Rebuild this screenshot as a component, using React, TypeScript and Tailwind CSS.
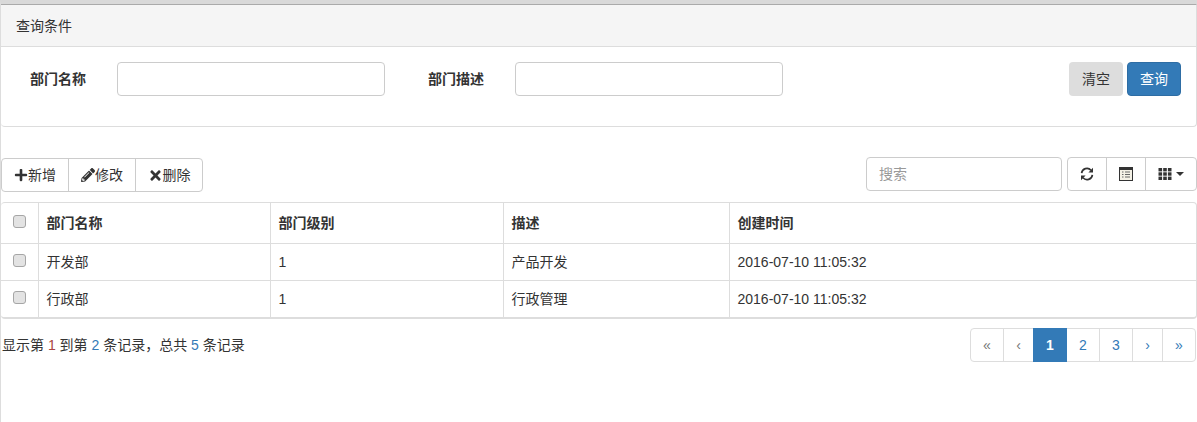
import { FaPencilAlt, FaPlus, FaTimes } from 'react-icons/fa'

const rows = [
    { name: '开发部', level: '1', desc: '产品开发', time: '2016-07-10 11:05:32' },
    { name: '行政部', level: '1', desc: '行政管理', time: '2016-07-10 11:05:32' },
]

const Checkbox = () => (
    <span className="block w-[13px] h-[13px] rounded-[3px] border border-[#a6a6a6] bg-[#e3e3e3]" />
)

const RefreshIcon = () => (
    <svg width="14" height="14" viewBox="0 0 14 14" fill="none">
        <path d="M1.6 6.2A5.4 5.4 0 0 1 11 3.2" stroke="#333" strokeWidth="1.7" />
        <path d="M12.4 7.8A5.4 5.4 0 0 1 3 10.8" stroke="#333" strokeWidth="1.7" />
        <path d="M13 0.8V5.4H8.4Z" fill="#333" />
        <path d="M1 13.2V8.6H5.6Z" fill="#333" />
    </svg>
)

const ListAltIcon = () => (
    <svg width="14" height="14" viewBox="0 0 14 14" fill="none">
        <rect x="0.5" y="0.5" width="13" height="13" fill="#f4f1e6" stroke="#333" />
        <rect x="1" y="1" width="12" height="2" fill="#333" />
        <path d="M3 5H4.5M3 7.5H4.5M3 10H4.5M6 5H11M6 7.5H11M6 10H11" stroke="#666" />
    </svg>
)

const ThIcon = () => (
    <svg width="14" height="14" viewBox="0 0 14 14" fill="#333">
        <rect x="0.5" y="1" width="3.6" height="3.4" />
        <rect x="5.2" y="1" width="3.6" height="3.4" />
        <rect x="9.9" y="1" width="3.6" height="3.4" />
        <rect x="0.5" y="5.3" width="3.6" height="3.4" />
        <rect x="5.2" y="5.3" width="3.6" height="3.4" />
        <rect x="9.9" y="5.3" width="3.6" height="3.4" />
        <rect x="0.5" y="9.6" width="3.6" height="3.4" />
        <rect x="5.2" y="9.6" width="3.6" height="3.4" />
        <rect x="9.9" y="9.6" width="3.6" height="3.4" />
    </svg>
)

const App = () => {
    return (
        <div
            className="w-[1197px] h-[422px] overflow-hidden bg-white text-[14px] text-[#333] border-t-[4px] border-t-[#d9d9d9] border-l border-l-[#ddd]"
            style={{ fontFamily: '"Liberation Sans", "Noto Sans CJK SC", sans-serif' }}
        >
            {/* Query panel */}
            <section className="h-[123px] rounded-b-[4px] border border-[#ddd] border-l-0 border-t-[#aaa]">
                <div className="h-[42px] flex items-center pl-[15px] pt-[1px] bg-[#f5f5f5] border-b border-[#ddd] leading-none">查询条件</div>
                <div className="flex items-start pt-[15px] pr-[15px]">
                    <label className="w-[116px] h-[34px] pl-[29px] flex items-center font-bold">部门名称</label>
                    <input className="w-[268px] h-[34px] rounded-[4px] border border-[#ccc] bg-white" />
                    <label className="w-[130px] h-[34px] pl-[43px] flex items-center font-bold">部门描述</label>
                    <input className="w-[268px] h-[34px] rounded-[4px] border border-[#ccc] bg-white" />
                    <div className="ml-auto flex gap-[4px]">
                        <button className="w-[54px] h-[34px] rounded-[4px] bg-[#ddd]">清空</button>
                        <button className="w-[54px] h-[34px] rounded-[4px] bg-[#337ab7] border border-[#2e6da4] text-white">查询</button>
                    </div>
                </div>
            </section>

            {/* Toolbar */}
            <div className="flex items-start justify-between mt-[30px]">
                <div className="flex h-[34px] mt-[1px] rounded-[4px] border border-[#ccc]">
                    <button className="w-[67px] flex items-center justify-center border-r border-[#ccc]">
                        <FaPlus className="w-[14px] h-[14px] text-[#333]" />新增
                    </button>
                    <button className="w-[67px] flex items-center justify-center border-r border-[#ccc]">
                        <FaPencilAlt className="w-[14px] h-[14px] text-[#333]" />修改
                    </button>
                    <button className="w-[66px] flex items-center justify-center">
                        <FaTimes className="w-[15px] h-[15px] text-[#333]" />删除
                    </button>
                </div>
                <div className="flex">
                    <input
                        placeholder="搜索"
                        className="w-[196px] h-[34px] px-[12px] rounded-[4px] border border-[#ccc] placeholder:text-[#999]"
                    />
                    <div className="flex h-[34px] ml-[5px] rounded-[4px] border border-[#ccc]">
                        <button className="w-[39px] flex items-center justify-center border-r border-[#ccc]">
                            <RefreshIcon />
                        </button>
                        <button className="w-[39px] flex items-center justify-center border-r border-[#ccc]">
                            <ListAltIcon />
                        </button>
                        <button className="w-[50px] flex items-center justify-center gap-[4px]">
                            <ThIcon />
                            <span className="border-x-[4px] border-x-transparent border-t-[4px] border-t-[#333]" />
                        </button>
                    </div>
                </div>
            </div>

            {/* Table */}
            <div className="mt-[10px] rounded-[4px] border border-[#ddd] border-b-[2px] border-l-0">
                <table className="w-full table-fixed border-collapse">
                    <thead>
                        <tr className="h-[40px] border-b border-[#ddd]">
                            <th className="w-[37px] border-r border-[#ddd]"><span className="flex justify-center -translate-y-[1px]"><Checkbox /></span></th>
                            <th className="w-[232px] pl-[8px] pt-[2px] text-left font-bold border-r border-[#ddd]">部门名称</th>
                            <th className="w-[233px] pl-[8px] pt-[2px] text-left font-bold border-r border-[#ddd]">部门级别</th>
                            <th className="w-[226px] pl-[8px] pt-[2px] text-left font-bold border-r border-[#ddd]">描述</th>
                            <th className="pl-[8px] pt-[2px] text-left font-bold">创建时间</th>
                        </tr>
                    </thead>
                    <tbody>
                        {rows.map((row, i) => (
                            <tr key={row.name} className={i === 0 ? 'h-[37px] border-b border-[#ddd]' : 'h-[37px]'}>
                                <td className="border-r border-[#ddd]"><span className="flex justify-center -translate-y-[1px]"><Checkbox /></span></td>
                                <td className="pl-[8px] pt-[2px] border-r border-[#ddd]">{row.name}</td>
                                <td className="pl-[8px] pt-[2px] border-r border-[#ddd]">{row.level}</td>
                                <td className="pl-[8px] pt-[2px] border-r border-[#ddd]">{row.desc}</td>
                                <td className="pl-[8px] pt-[2px]">{row.time}</td>
                            </tr>
                        ))}
                    </tbody>
                </table>
            </div>

            {/* Footer */}
            <div className="flex items-start justify-between mt-[9px] pr-[1px]">
                <div className="h-[34px] pl-[1px] flex items-center whitespace-pre">
                    显示第 <span className="text-[#a94442]">1</span> 到第 <span className="text-[#337ab7]">2</span> 条记录，总共 <span className="text-[#337ab7]">5</span> 条记录
                </div>
                <div className="flex h-[34px] rounded-[4px] border border-[#ddd] text-[#337ab7]">
                    <span className="w-[33px] flex items-center justify-center border-r border-[#ddd] text-[#777]">«</span>
                    <span className="w-[29px] flex items-center justify-center text-[#777]">‹</span>
                    <span className="w-[34px] -my-[1px] flex items-center justify-center bg-[#337ab7] text-white font-bold">1</span>
                    <span className="w-[33px] flex items-center justify-center border-r border-[#ddd]">2</span>
                    <span className="w-[33px] flex items-center justify-center border-r border-[#ddd]">3</span>
                    <span className="w-[30px] flex items-center justify-center border-r border-[#ddd]">›</span>
                    <span className="w-[32px] flex items-center justify-center">»</span>
                </div>
            </div>
        </div>
    )
}

export default App
